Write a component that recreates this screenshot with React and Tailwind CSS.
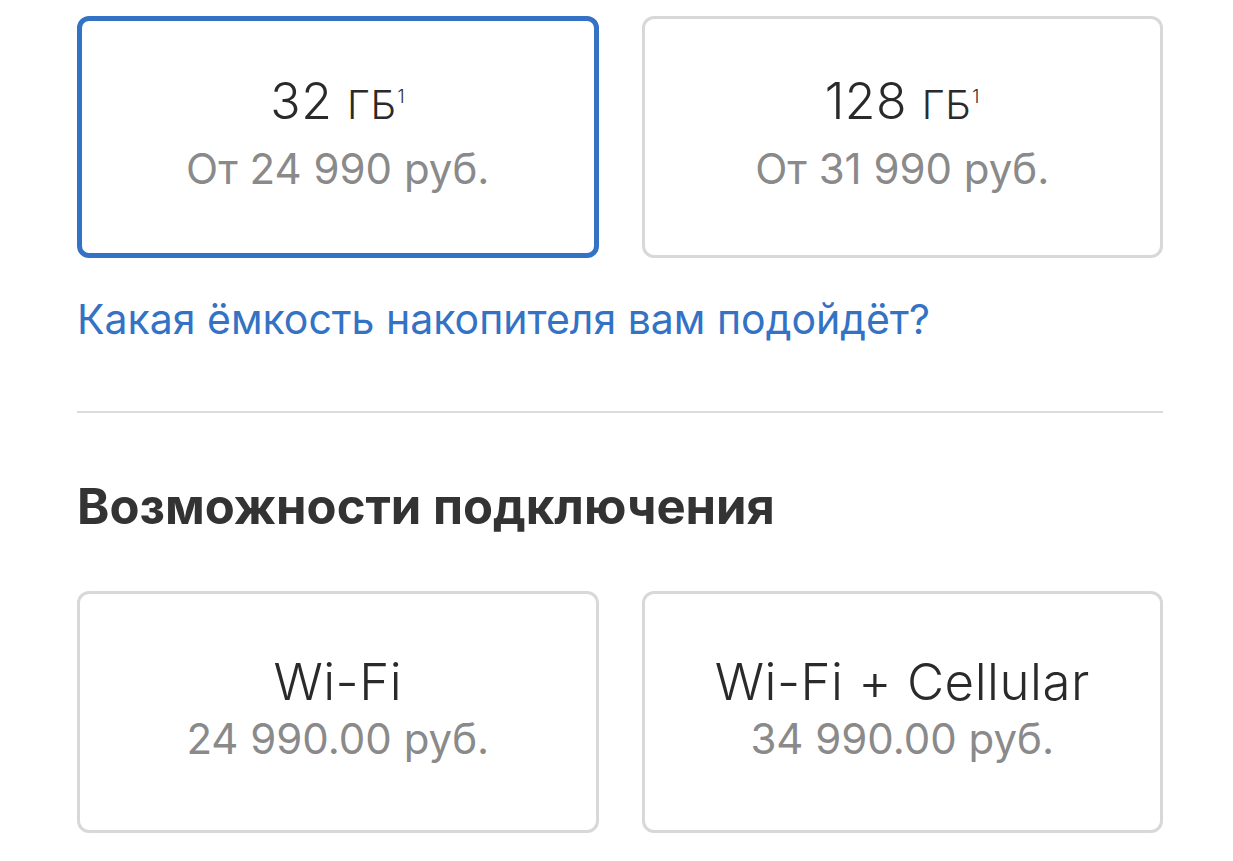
const storage = [
  { size: "32", price: "От 24 990 руб.", selected: true },
  { size: "128", price: "От 31 990 руб.", selected: false },
];

const connectivity = [
  { name: "Wi-Fi", price: "24 990.00 руб." },
  { name: "Wi-Fi + Cellular", price: "34 990.00 руб." },
];

const font = { fontFamily: "Inter, 'Liberation Sans', sans-serif" };

const OptionCard = ({ selected, children }) => (
  <div
    className={
      selected
        ? "h-[242px] rounded-[12px] border-[5px] border-[#3372c4] bg-white flex flex-col items-center justify-center pb-2"
        : "h-[242px] rounded-[12px] border-[3px] border-[#d8d8d8] bg-white flex flex-col items-center justify-center pb-2"
    }
  >
    {children}
  </div>
);

const App = () => {
  return (
    <div className="w-full min-h-screen bg-white" style={font}>
      <div className="pl-[77px] pr-[70px] pt-[16px]">
        <div className="grid grid-cols-2 gap-[43px]">
          {storage.map((s) => (
            <OptionCard key={s.size} selected={s.selected}>
              <div className="text-[50px] leading-[60px] font-light text-[#2a2a2a] tracking-[0.5px]">
                {s.size} <span className="text-[40px]">ГБ</span>
                <span className="text-[18px] relative -top-[16px] ml-[1px]">1</span>
              </div>
              <div className="mt-0 text-[42px] leading-[52px] text-[#8a8a8a]">
                {s.price}
              </div>
            </OptionCard>
          ))}
        </div>

        <a className="block mt-[37px] text-[41px] leading-[48px] text-[#3372c4] cursor-pointer">
          Какая ёмкость накопителя вам подойдёт?
        </a>

        <div className="mt-[68px] h-[2px] bg-[#dcdcdc]" />

        <h2 className="mt-[65px] text-[49px] leading-[58px] font-bold text-[#333333]">
          Возможности подключения
        </h2>

        <div className="mt-[55px] grid grid-cols-2 gap-[43px]">
          {connectivity.map((c) => (
            <OptionCard key={c.name}>
              <div className="text-[51px] leading-[60px] font-light text-[#2a2a2a] tracking-[0.5px]">
                {c.name}
              </div>
              <div className="mt-[1px] text-[42px] leading-[52px] text-[#8a8a8a]">
                {c.price}
              </div>
            </OptionCard>
          ))}
        </div>
      </div>
    </div>
  );
};

export default App;
